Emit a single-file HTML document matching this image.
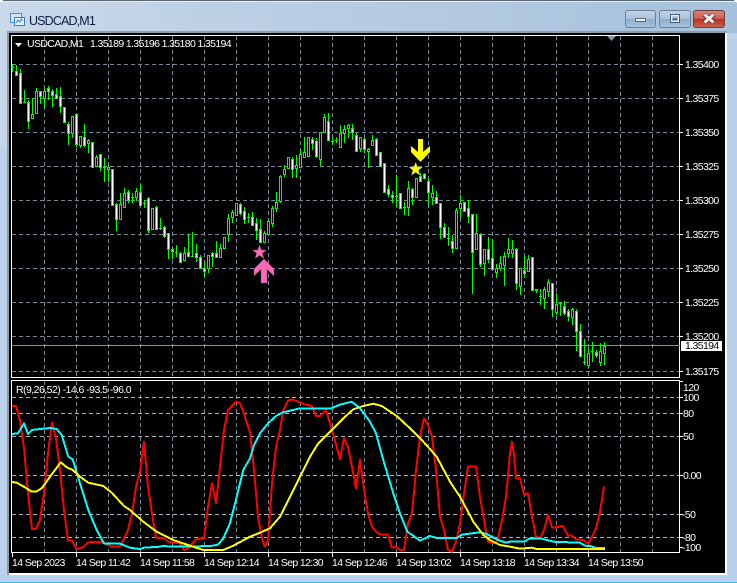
<!DOCTYPE html>
<html><head><meta charset="utf-8"><style>
html,body{margin:0;padding:0;background:#b9d1ea}
svg{display:block}
text{font-family:"Liberation Sans",sans-serif;font-size:10.5px;letter-spacing:-.62px;fill:#fff}
.w{fill:none;stroke:#0f0;stroke-width:1}
</style></head><body>
<svg width="737" height="583" viewBox="0 0 737 583" xmlns="http://www.w3.org/2000/svg">
<defs>
<linearGradient id="tb" x1="0" y1="0" x2="1" y2="0"><stop offset="0" stop-color="#c9d9e9"/><stop offset=".3" stop-color="#bdd0e4"/><stop offset="1" stop-color="#a6c1dc"/></linearGradient>
<linearGradient id="b1" x1="0" y1="0" x2="0" y2="1"><stop offset="0" stop-color="#c3d5e7"/><stop offset=".48" stop-color="#a9c3dc"/><stop offset=".52" stop-color="#8daccb"/><stop offset="1" stop-color="#a9c5df"/></linearGradient>
<linearGradient id="b2" x1="0" y1="0" x2="0" y2="1"><stop offset="0" stop-color="#dd8577"/><stop offset=".48" stop-color="#cc5f4e"/><stop offset=".52" stop-color="#b7301d"/><stop offset="1" stop-color="#c9654f"/></linearGradient>
<linearGradient id="ls" x1="0" y1="0" x2="0" y2="1"><stop offset="0" stop-color="#c8d8e8"/><stop offset=".2" stop-color="#c6d8ea"/><stop offset=".22" stop-color="#b9d1ea"/><stop offset="1" stop-color="#b9d1ea"/></linearGradient>
</defs>
<rect width="737" height="583" fill="#b9d1ea"/>
<rect width="737" height="33" fill="url(#tb)"/>
<rect x="3" y="0" width="731" height="1" fill="#5a6672"/>
<rect x="1" y="1" width="735" height="1" fill="#e6edf4"/>
<path d="M0 0h3L0 3zM737 0h-3L737 3z" fill="#fff"/>
<rect x="0" y="33" width="7" height="548" fill="url(#ls)"/>
<rect x="7" y="31" width="2" height="544" fill="#8c99a6"/>
<rect x="7" y="31" width="720" height="2" fill="#8e9cab"/>
<rect x="9" y="33" width="716" height="540" fill="#000"/>
<rect x="725" y="33" width="2" height="542" fill="#fff"/>
<rect x="9" y="573" width="718" height="2" fill="#fff"/>
<rect x="0" y="582" width="737" height="1" fill="#2cc6da"/>

<!-- title icon -->
<rect x="10.5" y="13.5" width="11" height="9" fill="#cfe4f8" stroke="#4d8fd0"/>
<rect x="14.5" y="17.5" width="10" height="8" fill="#e8f3fd" stroke="#3a80c8"/>
<path d="M16 23l2-3 1.500 2 2-3 1 2" fill="none" stroke="#3a80c8"/>
<text x="29" y="25" style="font-size:12.5px;letter-spacing:-.85px;fill:#141c42">USDCAD,M1</text>

<!-- buttons -->
<rect x="625.500" y="10.500" width="30" height="17" rx="2.500" fill="url(#b1)" stroke="#6d7f94"/>
<rect x="659.500" y="10.500" width="31" height="17" rx="2.500" fill="url(#b1)" stroke="#6d7f94"/>
<rect x="693.500" y="10.500" width="31" height="17" rx="2.500" fill="url(#b2)" stroke="#6b3b3f"/>
<rect x="635.500" y="18.500" width="10" height="3" fill="#e8edf3" stroke="#5a6b80"/>
<rect x="670.500" y="14.500" width="9" height="8" fill="none" stroke="#4c5d72" stroke-width="1"/>
<rect x="671.500" y="15.500" width="7" height="6" fill="none" stroke="#eef2f6"/>
<rect x="673" y="18" width="4" height="2" fill="#5a6b80"/>
<path d="M704 14.500l10 8M714 14.500l-10 8" stroke="#5a2a2a" stroke-width="4.500" fill="none"/>
<path d="M704.500 14.500l9 8M713.500 14.500l-9 8" stroke="#f2f2f2" stroke-width="3" fill="none"/>

<!-- grid -->
<g fill="none" stroke="#778899" stroke-width="1" stroke-dasharray="4 3" shape-rendering="crispEdges">
<path d="M12 64.500H680M12 98.500H680M12 132.500H680M12 166.500H680M12 200.500H680M12 234.500H680M12 268.500H680M12 302.500H680M12 336.500H680M12 371.500H680"/>
<path d="M44.500 36V378M76.500 36V378M108.500 36V378M140.500 36V378M172.500 36V378M204.500 36V378M236.500 36V378M268.500 36V378M300.500 36V378M332.500 36V378M364.500 36V378M396.500 36V378M428.500 36V378M460.500 36V378M492.500 36V378M524.500 36V378M556.500 36V378M588.500 36V378M620.500 36V378M652.500 36V378"/>
<path d="M44.500 381V553M76.500 381V553M108.500 381V553M140.500 381V553M172.500 381V553M204.500 381V553M236.500 381V553M268.500 381V553M300.500 381V553M332.500 381V553M364.500 381V553M396.500 381V553M428.500 381V553M460.500 381V553M492.500 381V553M524.500 381V553M556.500 381V553M588.500 381V553M620.500 381V553M652.500 381V553"/>
<path stroke="#aab2bc" d="M12 397.500H680M12 413.500H680M12 436.500H680M12 475.500H680M12 514.500H680M12 537.500H680"/>
</g>

<!-- pane frames -->
<g fill="none" stroke="#fff" stroke-width="1" shape-rendering="crispEdges">
<rect x="11.500" y="35.500" width="668" height="342"/>
<rect x="11.500" y="380.500" width="668" height="172"/>
<path d="M680 64.500h3M680 98.500h3M680 132.500h3M680 166.500h3M680 200.500h3M680 234.500h3M680 268.500h3M680 302.500h3M680 336.500h3M680 371.500h3"/>
<path d="M680 381.500h3M680 397.500h3M680 413.500h3M680 436.500h3M680 475.500h3M680 514.500h3M680 537.500h3M680 547.500h3"/>
<path d="M12.500 553v4M76.500 553v4M140.500 553v4M204.500 553v4M268.500 553v4M332.500 553v4M396.500 553v4M460.500 553v4M524.500 553v4M588.500 553v4"/>
</g>
<path d="M607 36h9l-4.500 5z" fill="#8293a5"/>
<path d="M15 43h7l-3.500 4z" fill="#fff"/>

<!-- price line -->
<rect x="12" y="345" width="668" height="1" fill="#8293a5"/>

<!-- candles -->
<g shape-rendering="crispEdges">
<path class="w" d="M12.500 64V72M16.500 65V76M20.500 69V103M24.500 90V103M28.500 100V129M32.500 98V118M36.500 88V114M40.500 91V104M44.500 88V107M48.500 86V100M52.500 89V107M56.500 88V98M60.500 87V113M64.500 107V123M68.500 122V145M72.500 116V138M76.500 113V147M80.500 136V148M84.500 124V147M88.500 139V153M92.500 142V167M96.500 155V167M100.500 154V171M104.500 158V182M108.500 165V182M112.500 169V206M116.500 203V231M120.500 193V219M124.500 188V207M128.500 190V203M132.500 193V203M136.500 188V201M140.500 184V206M144.500 200V208M148.500 197V233M152.500 208V230M156.500 206V230M160.500 218V230M164.500 226V238M168.500 233V259M172.500 247V259M176.500 245V257M180.500 252V263M184.500 247V261M188.500 234V257M192.500 232V257M196.500 244V262M200.500 255V269M204.500 262V277M208.500 255V273M212.500 252V267M216.500 241V258M220.500 244V257M224.500 237V248M228.500 214V242M232.500 210V223M236.500 203V216M240.500 203V215M244.500 207V224M248.500 213V223M252.500 212V226M256.500 218V240M260.500 219V243M264.500 231V243M268.500 220V235M272.500 206V227M276.500 192V212M280.500 175V203M284.500 165V177M288.500 157V168M292.500 157V178M296.500 155V178M300.500 149V168M304.500 137V158M308.500 137V157M312.500 137V150M316.500 138V158M320.500 132V166M324.500 114V133M328.500 113V141M332.500 137V145M336.500 137V143M340.500 125V147M344.500 125V143M348.500 124V138M352.500 124V140M356.500 133V152M360.500 137V152M364.500 137V153M368.500 148V168M372.500 135V145M376.500 138V156M380.500 152V166M384.500 163V193M388.500 185V197M392.500 191V203M396.500 175V207M400.500 193V209M404.500 202V215M408.500 181V216M412.500 188V205M416.500 178V197M420.500 173V182M424.500 173V179M428.500 178V206M432.500 185V205M436.500 191V204M440.500 203V239M444.500 223V238M448.500 227V246M452.500 235V253M456.500 208V249M460.500 195V218M464.500 202V212M468.500 200V223M472.500 214V294M476.500 214V249M480.500 233V267M484.500 249V276M488.500 237V263M492.500 239V270M496.500 264V278M500.500 256V271M504.500 252V286M508.500 238V258M512.500 240V258M516.500 248V290M520.500 268V295M524.500 256V277M528.500 255V271M532.500 257V291M536.500 289V293M540.500 289V305M544.500 287V309M548.500 279V297M552.500 283V317M556.500 293V315M560.500 302V316M564.500 301V315M568.500 309V321M572.500 308V325M576.500 309V351M580.500 324V357M584.500 339V365M588.500 347V368M592.500 342V362M596.500 350V358M600.500 343V366M604.500 342V365"/>
<!-- dojis -->
<path class="w" d="M11 67.500h3M23 102.500h3M103 167.500h3M131 197.500h3M143 203.500h3M159 228.500h3M175 252.500h3M191 256.500h3M247 217.500h3M331 141.500h3M335 140.500h3M395 196.500h3M403 207.500h3M447 238.500h3M535 289.500h3M535 290.500h3M539 296.500h3M559 303.500h3M583 362.500h3M591 351.500h3"/>
<!-- hollow -->
<path fill="#000" stroke="#0f0" d="M31.500 114.500h2v4h-2zM35.500 91.500h2v22h-2zM43.500 91.500h2v7h-2zM71.500 116.500h2v17h-2zM79.500 136.500h2v9h-2zM87.500 140.500h2v3h-2zM95.500 157.500h2v9h-2zM107.500 167.500h2v2h-2zM119.500 204.500h2v15h-2zM123.500 193.500h2v14h-2zM135.500 191.500h2v6h-2zM151.500 208.500h2v21h-2zM183.500 253.500h2v7h-2zM207.500 255.500h2v13h-2zM219.500 248.500h2v9h-2zM223.500 237.500h2v11h-2zM227.500 218.500h2v16h-2zM231.500 212.500h2v5h-2zM235.500 203.500h2v12h-2zM263.500 233.500h2v9h-2zM267.500 221.500h2v13h-2zM271.500 208.500h2v15h-2zM275.500 202.500h2v6h-2zM279.500 176.500h2v25h-2zM283.500 169.500h2v5h-2zM287.500 157.500h2v11h-2zM295.500 165.500h2v3h-2zM299.500 154.500h2v13h-2zM303.500 152.500h2v5h-2zM307.500 137.500h2v19h-2zM319.500 132.500h2v27h-2zM323.500 117.500h2v15h-2zM339.500 133.500h2v14h-2zM343.500 129.500h2v4h-2zM347.500 125.500h2v3h-2zM359.500 137.500h2v11h-2zM367.500 149.500h2v2h-2zM371.500 140.500h2v5h-2zM407.500 188.500h2v19h-2zM415.500 178.500h2v19h-2zM431.500 193.500h2v4h-2zM455.500 210.500h2v38h-2zM459.500 203.500h2v5h-2zM475.500 233.500h2v16h-2zM483.500 249.500h2v14h-2zM495.500 268.500h2v4h-2zM499.500 263.500h2v5h-2zM503.500 256.500h2v9h-2zM507.500 249.500h2v4h-2zM511.500 249.500h2v4h-2zM519.500 268.500h2v18h-2zM527.500 259.500h2v12h-2zM543.500 289.500h2v9h-2zM547.500 282.500h2v9h-2zM555.500 304.500h2v8h-2zM571.500 309.500h2v8h-2zM587.500 353.500h2v12h-2zM599.500 351.500h2v11h-2zM603.500 346.500h2v7h-2z"/>
<!-- bear -->
<path fill="#fff" stroke="#0f0" d="M15.500 71.500h2v4h-2zM19.500 73.500h2v30h-2zM27.500 102.500h2v19h-2zM39.500 91.500h2v5h-2zM47.500 88.500h2v3h-2zM51.500 91.500h2v4h-2zM55.500 94.500h2v4h-2zM59.500 96.500h2v10h-2zM63.500 107.500h2v15h-2zM67.500 124.500h2v9h-2zM75.500 114.500h2v30h-2zM83.500 137.500h2v8h-2zM91.500 142.500h2v25h-2zM99.500 154.500h2v13h-2zM111.500 169.500h2v36h-2zM115.500 204.500h2v15h-2zM127.500 192.500h2v8h-2zM139.500 192.500h2v13h-2zM147.500 198.500h2v32h-2zM155.500 207.500h2v22h-2zM163.500 227.500h2v9h-2zM167.500 233.500h2v16h-2zM171.500 249.500h2v2h-2zM179.500 253.500h2v9h-2zM187.500 252.500h2v4h-2zM195.500 253.500h2v4h-2zM199.500 257.500h2v11h-2zM203.500 268.500h2v3h-2zM211.500 253.500h2v3h-2zM215.500 253.500h2v4h-2zM239.500 204.500h2v9h-2zM243.500 211.500h2v8h-2zM251.500 217.500h2v8h-2zM255.500 223.500h2v7h-2zM259.500 229.500h2v13h-2zM291.500 159.500h2v10h-2zM311.500 139.500h2v4h-2zM315.500 141.500h2v15h-2zM327.500 121.500h2v19h-2zM351.500 128.500h2v4h-2zM355.500 135.500h2v16h-2zM363.500 139.500h2v10h-2zM375.500 139.500h2v16h-2zM379.500 152.500h2v14h-2zM383.500 163.500h2v29h-2zM387.500 189.500h2v5h-2zM391.500 195.500h2v2h-2zM399.500 193.500h2v15h-2zM411.500 189.500h2v8h-2zM419.500 176.500h2v5h-2zM423.500 174.500h2v4h-2zM427.500 181.500h2v11h-2zM435.500 197.500h2v6h-2zM439.500 203.500h2v24h-2zM443.500 227.500h2v10h-2zM451.500 241.500h2v7h-2zM463.500 202.500h2v9h-2zM467.500 208.500h2v8h-2zM471.500 214.500h2v38h-2zM479.500 234.500h2v30h-2zM487.500 249.500h2v10h-2zM491.500 258.500h2v11h-2zM515.500 249.500h2v34h-2zM523.500 270.500h2v3h-2zM531.500 257.500h2v33h-2zM551.500 283.500h2v26h-2zM563.500 306.500h2v7h-2zM567.500 311.500h2v5h-2zM575.500 311.500h2v20h-2zM579.500 331.500h2v25h-2zM595.500 352.500h2v3h-2z"/>
</g>

<!-- arrows & stars -->
<path d="M264 259L274 269V276L267 269V283H261V269L254 276V269Z" fill="#ff69b4" stroke="#7a5aa8" stroke-width=".4"/>
<path d="M259.500 245l1.900 5h5.100l-4.100 3.200 1.500 5.300-4.400-3.100-4.400 3.100 1.500-5.300-4.100-3.200h5.100z" fill="#ff69b4" stroke="#6a4a98" stroke-width=".4"/>
<path d="M418 139H423V152L430 146V152L420.500 162L411 152V146L418 152Z" fill="#ff0"/>
<path d="M415.700 162l1.900 5h5.100l-4.100 3.200 1.500 5.300-4.400-3.100-4.400 3.100 1.500-5.300-4.100-3.200h5.100z" fill="#ff0" stroke="#6a6a20" stroke-width=".3"/>

<!-- indicator lines -->
<g fill="none" stroke-width="2" stroke-linejoin="round" shape-rendering="crispEdges">
<polyline stroke="#f00" points="12,405.700 16,406 20,420 24,448.300 28,493.300 32,529 36,529 40,520 44,493.300 48,453.300 52,422.700 56,438.300 60,470 64,510 68,540.700 72,540.700 76,548.300 80,548.300 84,546.700 88,542.300 100,542 104,543.300 112,546.700 120,546.700 124,538.300 128,530 132,513.300 136,486.700 140,471.700 144,441.700 148,486.700 152,513.300 156,537.700 164,538.300 168,541.700 180,543.300 184,550 188,548.300 196,539.300 204,538.300 208,506.700 212,483.300 216,503.300 220,466.700 224,430 228,410 236,401.700 240,403.300 244,413.300 248,426.700 250,431.700 254,470 258,516.700 262,538.300 264.700,546.700 268,540 272,483.300 276,446.700 280,430 283.300,410 288,400.700 292,399.300 300,402.300 304,404.300 312,406 316,416 320,416 326,410 330,423.300 334,436.700 340,459.300 344,438.300 348,446.700 352,466.700 356,488.300 360,459.300 364,490 368,513.300 372,526.700 376,531.700 380,534.300 388,534.300 392,547.700 396,546.700 400,550 404,550 408,523.300 412,513.300 416,470 420,436.700 424,418.300 428,425 432,436.700 436,470 440,516.700 444,530 448,550 452,551.700 456,541.700 460,523.300 464,493.300 468,466.700 476,466.700 480,496.700 484,520 488,541.700 496,543.300 498,538.300 502,520 506,496.700 510,453.300 512,441.700 514,453.300 516,478.300 520,478.300 524,495 528,493.300 532,516.700 536,536.700 540,538.300 544,530 548,515 552,527.300 556,527.300 562.700,525.700 568,535.700 572,535.700 576,539.300 584,540 588,544 592,536.700 596,528.300 600,511.700 604,486.700"/>
<polyline stroke="#0ff" points="12,434 18,433.300 24,423.300 28,434 32,430 40,429 50,428 56.700,429 61.700,435 68.300,456.700 72.700,459.300 80,483.300 88.300,510 96.700,530 104,543.300 120,543.700 130,547.700 140,549 144,547.700 160,546.700 163.300,545.700 170,546.700 190,546.700 213.300,545.700 218.300,544.300 223.300,538.300 230,523.300 236.700,496.700 243.300,470 250,458.300 254,445 260,433.300 268,423.300 276,416 283.300,412.300 300,408.300 330,408.700 340,404.700 351.700,401.700 360,408.300 370,421.700 376,433.300 383.300,460 393.300,493.300 400,513.300 407.300,531.700 413.300,535.700 420,540.700 425,538.300 430,536 436.700,538 456.700,538 461.700,534.700 480,532.300 486.700,534 498,540 506,542.700 510,541.700 524,541.700 530,538.300 540,538.300 550,540.700 553.300,541.700 580,542.700 585,545.700 590,546 596,548 605,548"/>
<polyline stroke="#ff0" points="12,482 16.700,482.700 25,487.300 31.700,491.700 36,491.700 41.700,488.300 50,476.700 60.700,462.300 66.700,467.300 72.700,470 80,476.700 88.300,482.700 103.300,486 111.700,492.700 124,506 130,510 143.300,521.700 156.700,531.700 173.300,540 190,545.700 203.300,550 223.300,550 233.300,545.700 250,536.700 260,532.700 270,528.300 280,516.700 290,496.700 300,476.700 310,456.700 318.300,443.300 330,431.700 343.300,418.300 353.300,409.300 363.300,406 373.300,403.700 381.700,406 396.700,416 410,428.300 423.300,441.700 436.700,456.700 450,481.700 460,496.700 473.300,521.700 483.300,535 490,540 500,545 510,546.700 520,548.700 531.700,547.700 536.700,549 605,549"/>
</g>

<!-- text -->
<text x="27" y="47">USDCAD,M1</text>
<text x="90" y="47" textLength="141">1.35189 1.35196 1.35180 1.35194</text>
<text x="16" y="393" textLength="115">R(9,26,52) -14.6 -93.5 -96.0</text>

<text x="685" y="68">1.35400</text>
<text x="685" y="102">1.35375</text>
<text x="685" y="136">1.35350</text>
<text x="685" y="170">1.35325</text>
<text x="685" y="204">1.35300</text>
<text x="685" y="238">1.35275</text>
<text x="685" y="272">1.35250</text>
<text x="685" y="306">1.35225</text>
<text x="685" y="340">1.35200</text>
<text x="685" y="375">1.35175</text>
<rect x="681" y="341" width="41" height="10" fill="#fff"/>
<text x="685" y="349" style="fill:#000">1.35194</text>

<text x="683" y="391">120</text>
<text x="683" y="401">100</text>
<text x="683" y="417">80</text>
<text x="683" y="440">50</text>
<text x="683" y="479">0.00</text>
<text x="682" y="518">-50</text>
<text x="682" y="541">-80</text>
<text x="682" y="551">-100</text>

<text x="12" y="566">14 Sep 2023</text>
<text x="76" y="566">14 Sep 11:42</text>
<text x="140" y="566">14 Sep 11:58</text>
<text x="204" y="566">14 Sep 12:14</text>
<text x="268" y="566">14 Sep 12:30</text>
<text x="332" y="566">14 Sep 12:46</text>
<text x="396" y="566">14 Sep 13:02</text>
<text x="460" y="566">14 Sep 13:18</text>
<text x="524" y="566">14 Sep 13:34</text>
<text x="588" y="566">14 Sep 13:50</text>
</svg>
</body></html>
